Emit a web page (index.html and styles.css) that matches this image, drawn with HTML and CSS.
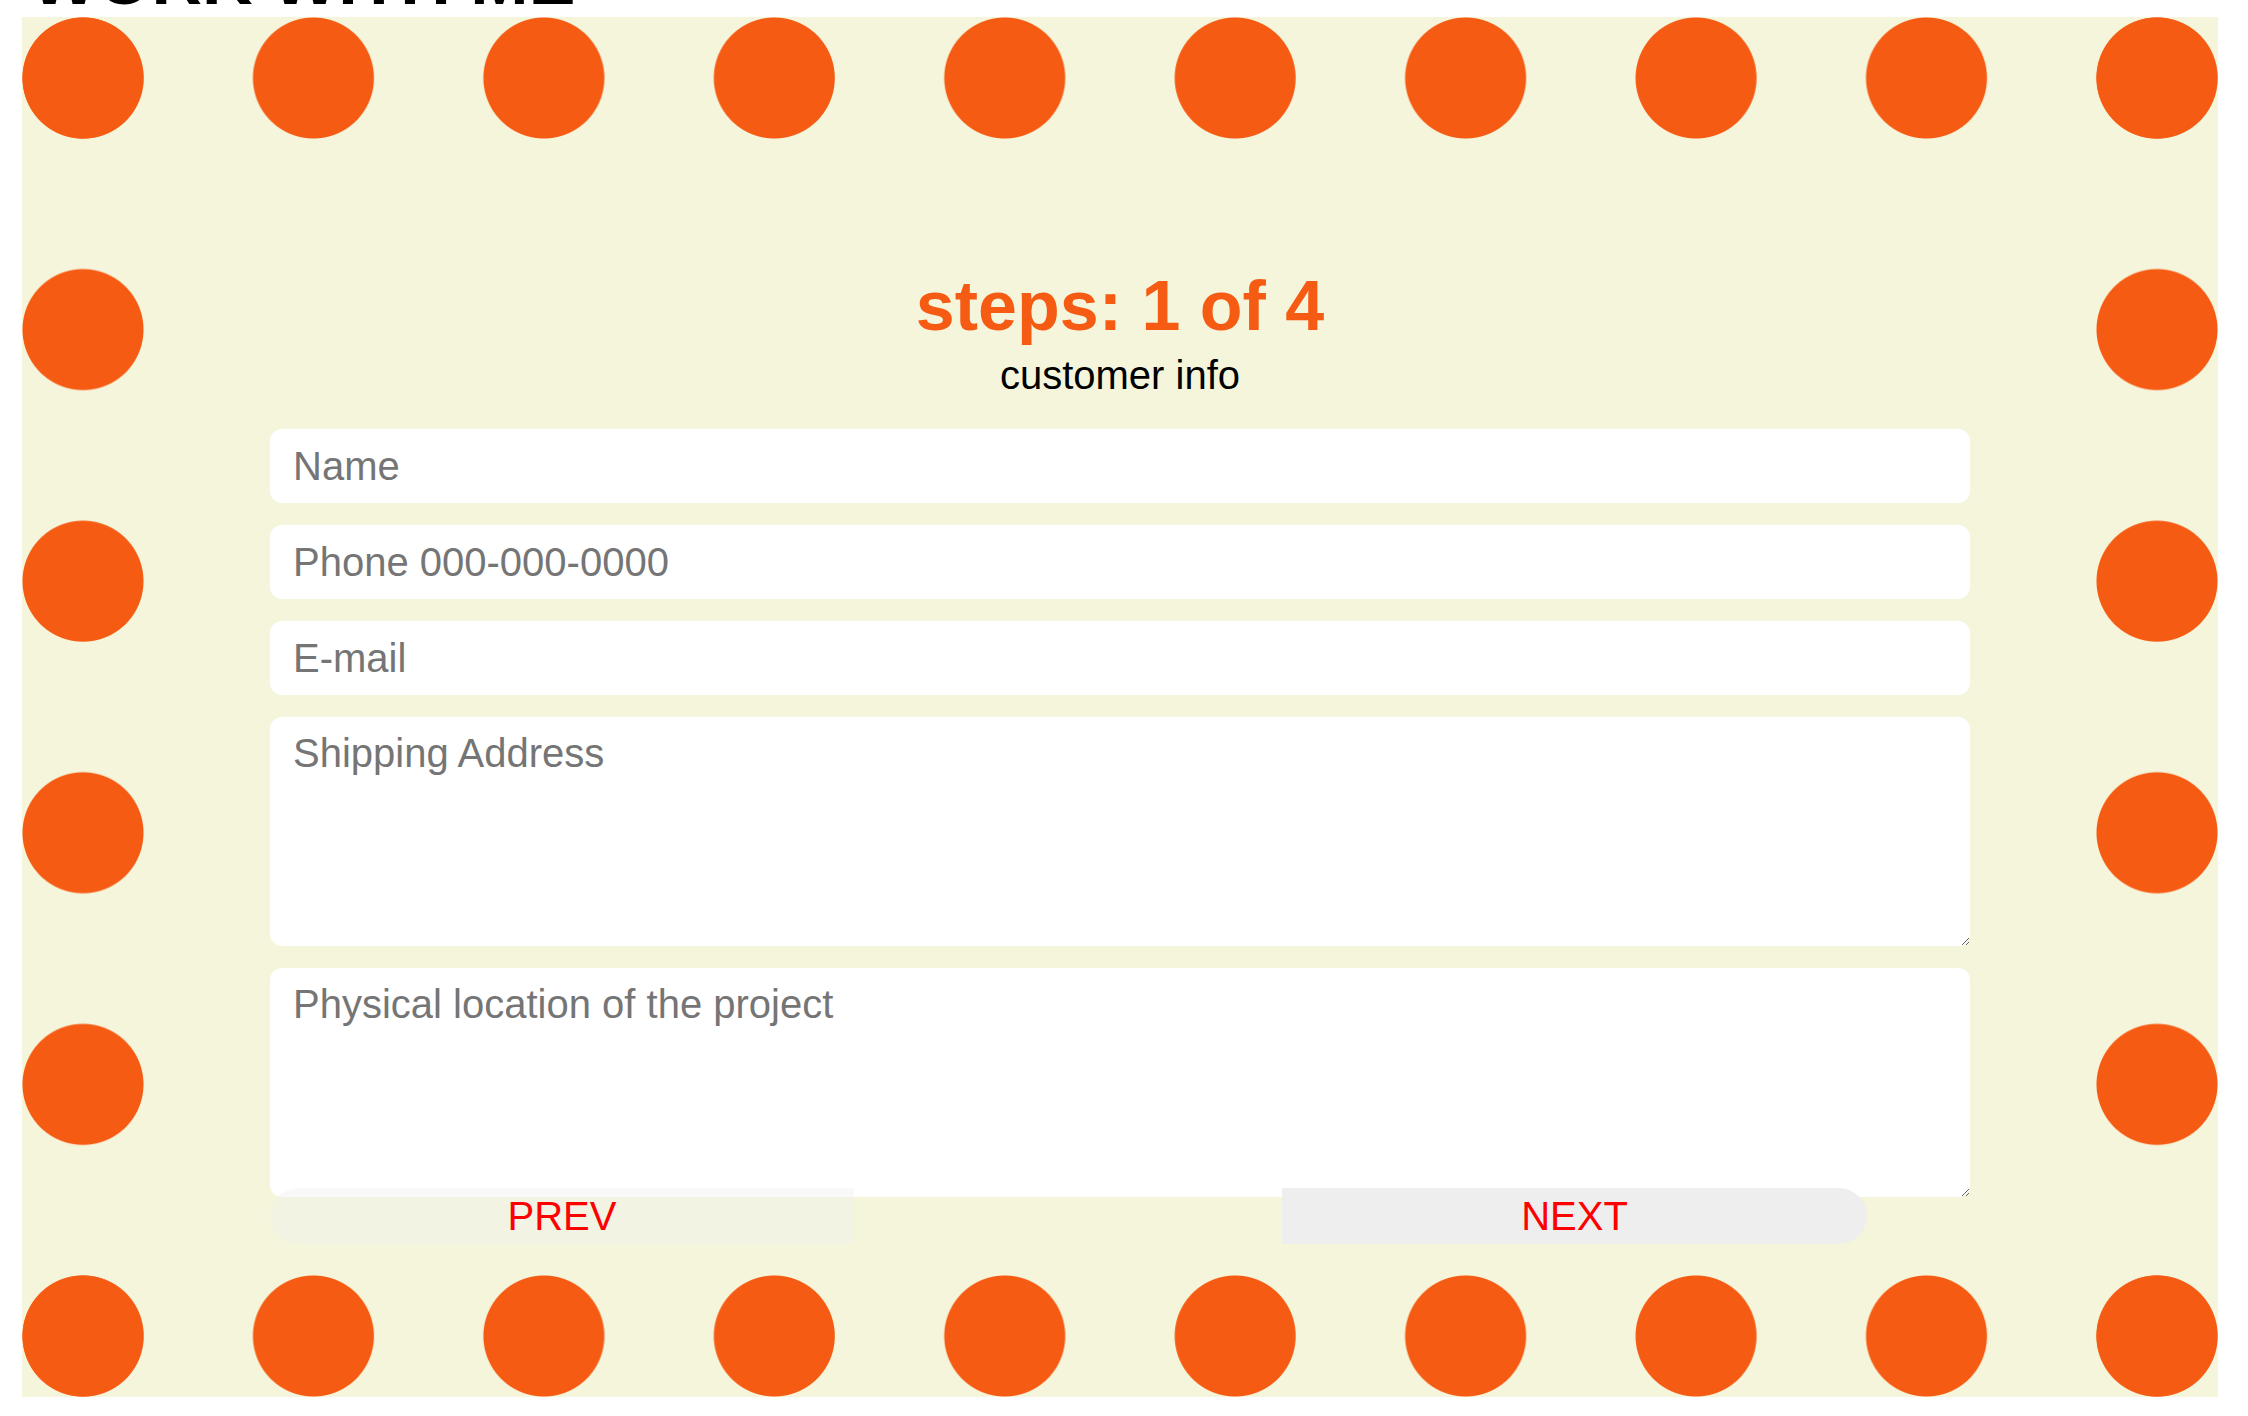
FILE: index.html
```
<!DOCTYPE html>
<html lang="en">
<head>
<meta charset="utf-8">
<title>Work with me</title>
<link rel="stylesheet" href="styles.css">
</head>
<body>
<h1 class="page-title">WORK WITH ME</h1>
<section class="frame">
  <h2 class="steps">steps: 1 of 4</h2>
  <p class="step-name">customer info</p>
  <form class="form">
    <div class="fields">
      <input class="field" type="text" placeholder="Name">
      <input class="field" type="tel" placeholder="Phone 000-000-0000">
      <input class="field" type="email" placeholder="E-mail">
      <textarea class="field area" placeholder="Shipping Address"></textarea>
      <textarea class="field area" placeholder="Physical location of the project"></textarea>
    </div>
    <div class="nav">
      <button type="button" class="btn prev">PREV</button>
      <button type="button" class="btn next">NEXT</button>
    </div>
  </form>
</section>
</body>
</html>
```
FILE: styles.css
```
html, body {
  margin: 0;
  padding: 0;
  background: #ffffff;
}

body {
  font-family: "Liberation Sans", Arial, Helvetica, sans-serif;
  width: 2248px;
  height: 1416px;
  overflow: hidden;
}

.page-title {
  font-size: 70px;
  font-weight: 700;
  line-height: 80px;
  height: 77px;
  margin: -60px 0 0 31px;
  color: #000;
}

.frame {
  box-sizing: border-box;
  width: 2196px;
  height: 1380px;
  margin: 0 0 0 22px;
  padding-top: 249px;
  display: flex;
  flex-direction: column;
  align-items: center;
  background-color: #f5f5dc;
  background-image:
    radial-gradient(circle 61px at 61px 61px, #f65b13 60px, rgba(246,91,19,0) 61px),
    radial-gradient(circle 61px at 61px 61px, #f65b13 60px, rgba(246,91,19,0) 61px),
    radial-gradient(circle 61px at 61px 61px, #f65b13 60px, rgba(246,91,19,0) 61px),
    radial-gradient(circle 61px at 61px 61px, #f65b13 60px, rgba(246,91,19,0) 61px);
  background-size:
    230.444px 122px,
    230.444px 122px,
    122px 251.6px,
    122px 251.6px;
  background-repeat: repeat-x, repeat-x, repeat-y, repeat-y;
  background-position: 0 0, 0 100%, 0 0, 100% 0;
}

.steps {
  margin: 0;
  font-size: 70px;
  font-weight: 700;
  line-height: 80px;
  color: #f65b13;
  text-align: center;
}

.step-name {
  margin: 6px 0 0;
  font-size: 40px;
  line-height: 46px;
  color: #000;
  text-align: center;
}

.form {
  width: 1700px;
  margin-top: 31px;
  display: flex;
  flex-direction: column;
}

.fields {
  display: flex;
  flex-direction: column;
  gap: 22px;
}

.field {
  box-sizing: border-box;
  display: block;
  width: 100%;
  height: 74px;
  margin: 0;
  padding: 0 23px;
  border: none;
  border-radius: 12px;
  background: #ffffff;
  font-family: "Liberation Sans", Arial, Helvetica, sans-serif;
  font-size: 40px;
  color: #222;
  outline: none;
}

.field::placeholder {
  color: #757575;
  opacity: 1;
}

.area {
  height: 229px;
  padding: 13px 23px;
  line-height: 46px;
  resize: both;
}

.nav {
  display: flex;
  gap: 428px;
  margin-top: -9px;
  position: relative;
}

.btn {
  box-sizing: border-box;
  width: 584px;
  height: 56px;
  margin: 0;
  padding: 0;
  border: none;
  font-family: "Liberation Sans", Arial, Helvetica, sans-serif;
  font-size: 40px;
  line-height: 46px;
  color: #ff0000;
  cursor: pointer;
}

.prev {
  background: rgba(239, 239, 239, 0.4);
  border-radius: 28px 0 0 28px;
}

.next {
  width: 585px;
  background: #eeeeee;
  border-radius: 0 28px 28px 0;
}
```
